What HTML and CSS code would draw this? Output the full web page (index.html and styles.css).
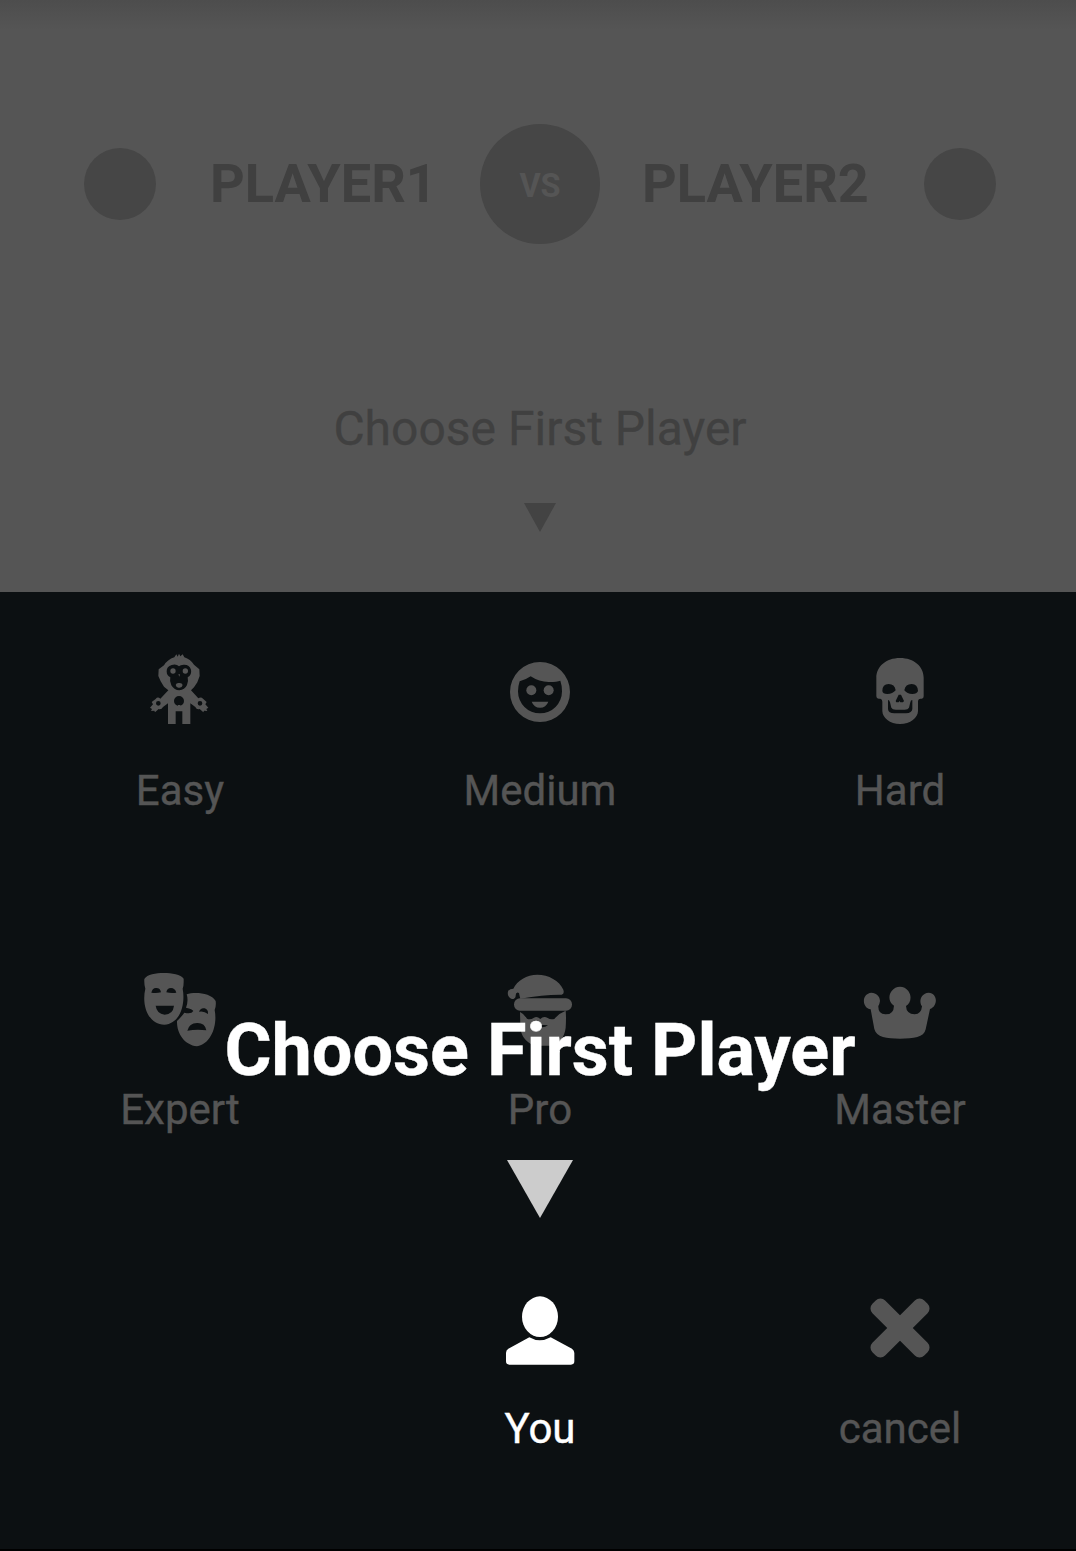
FILE: index.html
```html
<!DOCTYPE html>
<html lang="en">
<head>
<meta charset="utf-8">
<title>Choose First Player</title>
<link rel="stylesheet" href="styles.css">
</head>
<body>
<main class="screen">
  <header class="match">
    <div class="versus">
      <span class="dot"></span>
      <span class="name name-one">PLAYER1</span>
      <span class="badge">VS</span>
      <span class="name name-two">PLAYER2</span>
      <span class="dot"></span>
    </div>
    <p class="prompt">Choose First Player</p>
    <svg class="arrow" viewBox="0 0 32 29"><path d="M0 0H32L16 29Z"/></svg>
  </header>
  <section class="choices">
    <div class="choice">
      <svg class="icon" viewBox="0 0 300 300"><path fill-rule="evenodd" d="M133 52L139 43L143 50L147 41L151 49L158 43L163 52Q181 58 192 74L208 88L209 108L202 127L192 142L183 151L205 175Q213 169 219 176L230 186L226 193L235 203L229 207L232 213L222 212L220 217L209 207Q200 210 196 201L181 190V252H157V214H137V252H114V190L99 201Q94 210 86 207L75 217L73 212L63 213L66 207L60 203L69 193L65 186L77 177Q83 169 91 176L115 151L102 140L92 124L85 108L86 88L102 76Q112 59 133 52ZM147 79Q139 71 125 75Q110 79 110 94Q110 107 121 112Q118 124 124 136Q133 151 148 151Q164 150 171 135Q176 124 173 112Q186 105 183 89Q178 73 161 74Q151 74 147 79ZM147 168A15 15 0 1 0 147 198A15 15 0 1 0 147 168ZM85 183A7 7 0 1 0 85 197A7 7 0 1 0 85 183ZM210 183A7 7 0 1 0 210 197A7 7 0 1 0 210 183Z"/><circle cx="129" cy="93" r="8"/><circle cx="166" cy="93" r="8"/><path d="M145 103H150L148 110ZM137 135Q139 128 147 129Q156 128 158 135Q156 144 147 143Q139 144 137 135ZM144 195H151V204H144Z"/></svg>
      <span class="label">Easy</span>
    </div>
    <div class="choice">
      <svg class="icon" viewBox="0 0 300 300"><path fill-rule="evenodd" d="M150 66A90 90 0 1 0 150 246A90 90 0 1 0 150 66ZM89 124Q108 119 122 109Q149 127 179 126Q201 126 211 122Q216 136 216 154A66 66 0 1 1 84 154Q84 139 89 124Z"/><circle cx="124" cy="151" r="15"/><circle cx="176" cy="151" r="15"/><path d="M125 185H175Q168 203 150 203Q132 203 125 185Z"/></svg>
      <span class="label">Medium</span>
    </div>
    <div class="choice">
      <svg class="icon" viewBox="0 0 300 300"><path fill-rule="evenodd" d="M150 54C108 54 79 80 79 113V169Q79 176 86 176H91Q97 178 97 185V213C97 233 120 252 150 252C181 252 204 233 204 213V185Q204 176 212 176H215Q221 176 221 169V113C221 80 192 54 150 54ZM97 153Q97 132 116 132Q134 132 137 151Q128 162 112 162Q98 162 97 153ZM163 151Q166 132 185 132Q203 132 204 153Q201 162 187 162Q171 162 163 151ZM146 164H153L162 183L159 187H151L149 183L146 187H139L137 183ZM114 180Q118 180 120 187L124 203Q127 209 137 209H164Q174 209 177 203L181 187Q182 180 187 180V207Q186 219 168 220H133Q115 220 114 207Z"/></svg>
      <span class="label">Hard</span>
    </div>
    <div class="choice choice-middle">
      <svg class="icon" viewBox="0 0 300 300"><path fill-rule="evenodd" d="M43 57C51 43 78 39 101 39C125 39 153 44 161 56V67Q161 78 158 86C167 133 150 192 103 194C55 193 34 137 46 86Q42 75 43 57ZM64 98Q67 83 79 84Q91 84 93 97Q79 101 64 98ZM109 97Q111 84 123 84Q135 84 139 98Q124 101 109 97ZM77 137H132Q129 163 104 164Q80 161 77 137Z"/><path fill-rule="evenodd" d="M170 103C195 95 243 99 257 123Q259 138 254 150C263 195 244 252 201 259C163 255 140 220 141 183Q154 171 163 158Q184 164 190 153Q188 147 168 143Q176 122 170 103ZM207 155Q212 142 224 145Q235 148 234 162Q222 152 207 155ZM172 212Q178 188 203 189Q225 189 229 211Q201 207 172 212Z"/></svg>
      <span class="label">Expert</span>
    </div>
    <div class="choice choice-middle">
      <svg class="icon" viewBox="0 0 300 300"><path d="M72 116C60 120 49 105 55 92Q60 86 70 86C82 61 110 44 142 44C176 44 208 62 220 89Q224 102 215 104Q165 103 91 116Q89 110 87 99Q78 94 77 106Q78 113 72 116Z"/><rect x="72" y="115" width="174" height="37" rx="18"/><path d="M90 156Q100 160 111 176Q120 181 132 173Q141 168 151 177Q161 166 173 174Q181 180 193 177Q206 160 227 152Q229 172 227 203Q222 247 181 257H133Q93 240 91 200ZM142 197Q158 207 174 196Q158 193 142 197Z" fill-rule="evenodd"/></svg>
      <span class="label">Pro</span>
    </div>
    <div class="choice choice-middle">
      <svg class="icon" viewBox="0 0 300 300"><path d="M64 98C79 98 90 109 90 123Q89 131 85 138Q84 162 106 163Q131 164 132 137C115 127 115 105 125 93C137 76 163 76 175 93C186 109 183 129 168 138Q169 162 194 163Q214 162 216 139C206 126 211 100 236 98C263 99 265 138 240 147L227 208C222 233 191 236 150 236C110 236 79 232 73 207L62 148C34 143 35 100 64 98Z"/></svg>
      <span class="label">Master</span>
    </div>
    <div class="choice choice-last choice-you">
      <svg class="icon" viewBox="0 0 300 300"><ellipse cx="150" cy="110" rx="54" ry="61"/><path d="M118 172Q149 190 182 172L246 206Q253 211 253 219V244Q253 254 243 254H58Q48 254 48 244V219Q48 210 55 206Z"/></svg>
      <span class="label">You</span>
    </div>
    <div class="choice choice-last">
      <svg class="icon" viewBox="0 0 300 300"><g transform="rotate(45 150 144)"><rect x="40" y="117" width="220" height="54" rx="20"/><rect x="123" y="34" width="54" height="220" rx="20"/></g></svg>
      <span class="label">cancel</span>
    </div>
  </section>
  <div class="hint">
    <p class="hint-text">Choose First Player</p>
    <svg class="hint-arrow" viewBox="0 0 66 58"><path d="M0 0H66L33 58Z"/></svg>
  </div>
</main>
</body>
</html>
```
FILE: styles.css
```css
body {
  margin: 0;
  background: #0c1012;
  font-family: Roboto, "Liberation Sans", sans-serif;
}

p {
  margin: 0;
}

svg {
  display: block;
  fill: currentColor;
}

.screen {
  position: relative;
  box-sizing: border-box;
  height: 1551px;
  overflow: hidden;
  border-bottom: 2px solid #000;
}

.match {
  box-sizing: border-box;
  width: 1080px;
  height: 592px;
  padding-top: 124px;
  display: flex;
  flex-direction: column;
  align-items: center;
  background: linear-gradient(#4d4d4d, #555 30px);
  color: #404040;
}

.versus {
  display: grid;
  grid-template-columns: 72px 324px 120px 324px 72px;
  align-items: center;
  height: 120px;
}

.dot {
  height: 72px;
  border-radius: 50%;
  background: #464646;
}

.name {
  font-size: 54px;
  line-height: 64px;
  font-weight: 700;
}

.name-one {
  padding-left: 54px;
}

.name-two {
  padding-left: 42px;
}

.badge {
  height: 120px;
  border-radius: 50%;
  background: #464646;
  color: #555;
  font-size: 32.5px;
  line-height: 125px;
  font-weight: 700;
  text-align: center;
}

.prompt {
  margin-top: 153px;
  font-size: 48px;
  line-height: 64px;
  -webkit-text-stroke: 0.3px currentColor;
}

.arrow {
  width: 32px;
  height: 29px;
  margin-top: 42px;
  color: #434343;
}

.choices {
  width: 1080px;
  display: grid;
  grid-template-columns: repeat(3, 360px);
  grid-auto-rows: 320px;
  padding-top: 48px;
}

.choice {
  display: flex;
  flex-direction: column;
  align-items: center;
  gap: 26px;
  color: #555;
}

.choice-middle {
  gap: 25px;
}

.choice-last {
  gap: 24px;
}

.choice-you {
  grid-column: 2;
  color: #fff;
}

.icon {
  width: 100px;
  height: 100px;
}

.label {
  font-size: 42px;
  line-height: 50px;
  -webkit-text-stroke: 0.4px currentColor;
}

.hint {
  position: absolute;
  top: 1011px;
  left: 0;
  width: 1080px;
  display: flex;
  flex-direction: column;
  align-items: center;
  color: #fff;
}

.hint-text {
  font-size: 72px;
  line-height: 80px;
  font-weight: 700;
  -webkit-text-stroke: 0.4px currentColor;
}

.hint-arrow {
  width: 66px;
  height: 58px;
  margin-top: 69px;
  color: #ccc;
}
```
